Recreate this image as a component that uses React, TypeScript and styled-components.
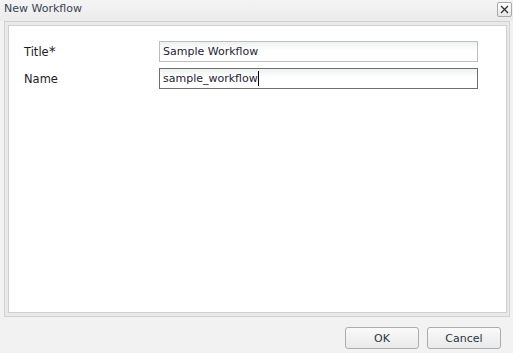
import styled, { createGlobalStyle } from "styled-components";

const Global = createGlobalStyle`
  html, body {
    margin: 0;
    padding: 0;
    background: #f2f2f2;
  }
  body {
    font-family: Tahoma, "DejaVu Sans", "Noto Sans", sans-serif;
  }
`;

const Dialog = styled.div`
  width: 513px;
  height: 353px;
  display: flex;
  flex-direction: column;
  background: #f2f2f2;
  box-sizing: border-box;
`;

const TitleBar = styled.div`
  height: 21px;
  display: flex;
  align-items: center;
  justify-content: space-between;
  padding: 0 1px 0 4px;
  box-sizing: border-box;
  background: linear-gradient(#f4f4f4, #ebebeb);
`;

const Heading = styled.span`
  font-size: 11px;
  color: #3a4358;
  margin-top: -4px;
`;

const CloseButton = styled.button`
  width: 15px;
  height: 15px;
  padding: 0;
  margin-top: -2px;
  border: 1px solid #a8a8a8;
  border-radius: 2px;
  background: linear-gradient(#ffffff, #e6e6e6);
  display: flex;
  align-items: center;
  justify-content: center;
`;

const Frame = styled.div`
  margin: 0 3px 0 4px;
  height: 296px;
  border: 1px solid #d2d2d2;
  background: #e9e9e9;
  padding: 3px 2px 3px 3px;
  box-sizing: border-box;
  display: flex;
`;

const Content = styled.div`
  flex: 1;
  background: #ffffff;
  border: 1px solid #cfcfcf;
  padding: 15px 28px 0 15px;
  display: flex;
  flex-direction: column;
  gap: 6px;
`;

const Row = styled.div`
  display: grid;
  grid-template-columns: 135px 1fr;
  align-items: center;
`;

const Label = styled.label`
  font-size: 11.5px;
  color: #1d1d24;
`;

const Star = styled.span`
  font-size: 14px;
  line-height: 10px;
`;

const Field = styled.div<{ $focused?: boolean }>`
  height: 21px;
  box-sizing: border-box;
  border: 1px solid ${(p) => (p.$focused ? "#6e6e6e" : "#bdbdbd")};
  background: linear-gradient(#eef1f1, #ffffff 45%);
  font-size: 11px;
  color: #1d2236;
  padding: 0 3px;
  display: flex;
  align-items: center;
`;

const Caret = styled.span`
  display: inline-block;
  width: 1px;
  height: 15px;
  background: #000;
`;

const Footer = styled.div`
  flex: 1;
  display: flex;
  justify-content: flex-end;
  align-items: flex-start;
  gap: 8px;
  padding: 10px 12px 0 0;
`;

const Button = styled.button`
  width: 74px;
  height: 22px;
  border: 1px solid #acacac;
  border-radius: 3px;
  background: linear-gradient(#fafafa, #e9e9e9);
  font-family: inherit;
  font-size: 11px;
  color: #2c3444;
  padding: 0;
`;

export default function App() {
  return (
    <Dialog>
      <Global />
      <TitleBar>
        <Heading>New Workflow</Heading>
        <CloseButton aria-label="close">
          <svg width="9" height="9" viewBox="0 0 9 9">
            <path d="M1 1 L8 8 M8 1 L1 8" stroke="#333" strokeWidth="1.3" />
          </svg>
        </CloseButton>
      </TitleBar>
      <Frame>
        <Content>
          <Row>
            <Label>
              Title<Star>*</Star>
            </Label>
            <Field>Sample Workflow</Field>
          </Row>
          <Row>
            <Label>Name</Label>
            <Field $focused>
              sample_workflow
              <Caret />
            </Field>
          </Row>
        </Content>
      </Frame>
      <Footer>
        <Button>OK</Button>
        <Button>Cancel</Button>
      </Footer>
    </Dialog>
  );
}
